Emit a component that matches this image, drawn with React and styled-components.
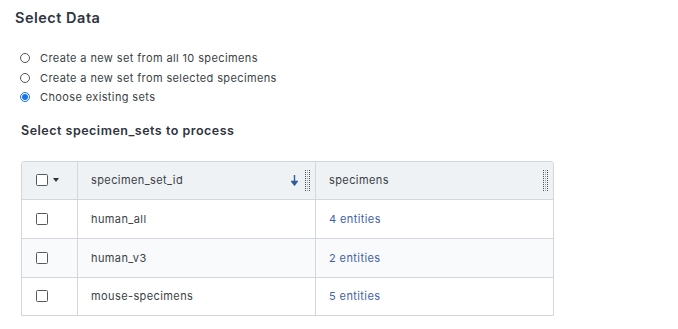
import React from 'react';
import styled, { createGlobalStyle } from 'styled-components';

const GlobalStyle = createGlobalStyle`
  body {
    margin: 0;
    background: #fff;
    font-family: Inter, "Open Sans", sans-serif;
    color: #3a3f45;
  }
`;

const Page = styled.div`
  padding: 8px 15px 0 15px;
  width: 678px;
  box-sizing: border-box;
`;

const Title = styled.h2`
  margin: 0;
  font-size: 14.5px;
  font-weight: 600;
  letter-spacing: 0.5px;
  color: #2f3540;
  line-height: 20px;
`;

const RadioGroup = styled.div`
  margin-top: 22px;
  padding-left: 5px;
  display: flex;
  flex-direction: column;
  gap: 3px;
`;

const RadioRow = styled.label`
  display: flex;
  align-items: center;
  gap: 10px;
  font-size: 11px;
  letter-spacing: 0.38px;
  line-height: 16.5px;
  color: #3a3f45;
`;

const RadioDot = styled.span`
  width: 10px;
  height: 10px;
  border-radius: 50%;
  box-sizing: border-box;
  border: 1px solid ${p => (p.checked ? '#1a73e8' : '#555')};
  display: flex;
  align-items: center;
  justify-content: center;
  &::after {
    content: '';
    width: 6px;
    height: 6px;
    border-radius: 50%;
    background: ${p => (p.checked ? '#1a73e8' : 'transparent')};
  }
`;

const SubTitle = styled.h3`
  margin: 16px 0 0 6px;
  font-size: 12.5px;
  font-weight: 600;
  letter-spacing: 0.5px;
  color: #2f3540;
  line-height: 18px;
`;

const Table = styled.div`
  margin: 21px 0 0 6px;
  width: 533px;
  box-sizing: border-box;
  border: 1px solid #d3d7db;
  border-radius: 3px 3px 0 0;
  display: grid;
  grid-template-columns: 56px 238px 1fr;
  overflow: hidden;
`;

const HeadCell = styled.div`
  height: 37px;
  background: #eef2f4;
  border-bottom: 1px solid #d3d7db;
  border-right: ${p => (p.last ? 'none' : '1px solid #d3d7db')};
  display: flex;
  align-items: center;
  padding: ${p => (p.first ? '0 0 0 14px' : '0 5px 0 13px')};
  font-size: 11px;
  letter-spacing: 0.4px;
  color: #3a3f45;
`;

const Cell = styled.div`
  height: ${p => (p.bottom ? '37px' : '38px')};
  background: ${p => (p.striped ? '#f9fafb' : '#fff')};
  border-bottom: ${p => (p.bottom ? 'none' : '1px solid #d3d7db')};
  border-right: ${p => (p.last ? 'none' : '1px solid #d3d7db')};
  display: flex;
  align-items: center;
  padding-left: ${p => (p.first ? '14px' : '13px')};
  font-size: 11px;
  letter-spacing: 0.4px;
  color: ${p => (p.link ? '#3e62a4' : '#3a3f45')};
`;

const Box = styled.span`
  width: 10px;
  height: 10px;
  border: 1px solid #555a60;
  border-radius: 1.5px;
  background: #fff;
`;

const Caret = styled.span`
  margin-left: 5px;
  width: 0;
  height: 0;
  border-left: 3.5px solid transparent;
  border-right: 3.5px solid transparent;
  border-top: 4px solid #333;
`;

const HeadLabel = styled.span`
  flex: 1;
`;

const SortIcon = styled.svg`
  margin-right: 7px;
`;

function Grip() {
  const dots = [];
  for (let r = 0; r < 11; r++) {
    for (let c = 0; c < 3; c++) {
      dots.push(
        <rect key={`${r}-${c}`} x={c * 2} y={r * 2} width="1" height="1"
          fill={c === 1 ? '#9aa0a6' : '#4a4f55'} />
      );
    }
  }
  return <svg width="5" height="21" viewBox="0 0 5 21">{dots}</svg>;
}

const rows = [
  { id: 'human_all', count: '4 entities' },
  { id: 'human_v3', count: '2 entities' },
  { id: 'mouse-specimens', count: '5 entities' },
];

export default function App() {
  return (
    <Page>
      <GlobalStyle />
      <Title>Select Data</Title>
      <RadioGroup>
        <RadioRow><RadioDot />Create a new set from all 10 specimens</RadioRow>
        <RadioRow><RadioDot />Create a new set from selected specimens</RadioRow>
        <RadioRow><RadioDot checked />Choose existing sets</RadioRow>
      </RadioGroup>
      <SubTitle>Select specimen_sets to process</SubTitle>
      <Table>
        <HeadCell first>
          <Box />
          <Caret />
        </HeadCell>
        <HeadCell>
          <HeadLabel>specimen_set_id</HeadLabel>
          <SortIcon width="7" height="11" viewBox="0 0 7 11">
            <path d="M3.5 0 V9 M0.8 6.5 L3.5 10 L6.2 6.5 Z" stroke="#2f5c9c" strokeWidth="1.4" fill="#2f5c9c" />
          </SortIcon>
          <Grip />
        </HeadCell>
        <HeadCell last>
          <HeadLabel>specimens</HeadLabel>
          <Grip />
        </HeadCell>
        {rows.map((r, i) => (
          <React.Fragment key={r.id}>
            <Cell first striped={i === 1} bottom={i === rows.length - 1}><Box /></Cell>
            <Cell striped={i === 1} bottom={i === rows.length - 1}>{r.id}</Cell>
            <Cell last link striped={i === 1} bottom={i === rows.length - 1}>{r.count}</Cell>
          </React.Fragment>
        ))}
      </Table>
    </Page>
  );
}
